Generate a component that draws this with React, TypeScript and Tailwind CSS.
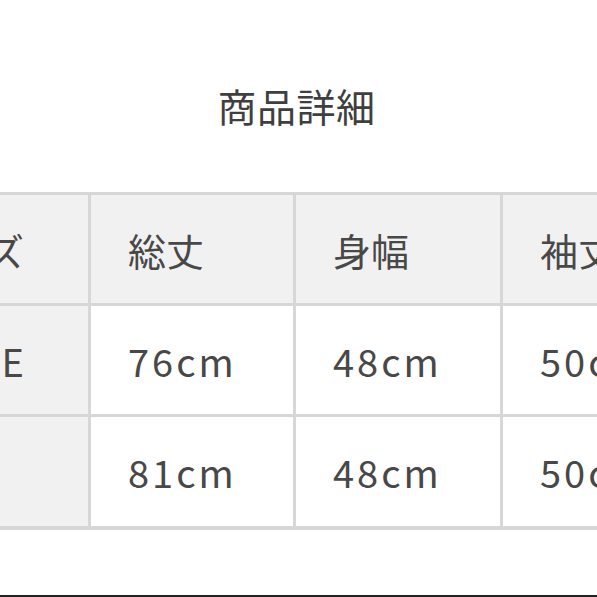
import React from "react";

const font = { fontFamily: '"Noto Sans CJK JP", "Noto Sans", sans-serif' };

function Cell({
  children,
  gray,
  first,
}: {
  children?: React.ReactNode;
  gray?: boolean;
  first?: boolean;
}) {
  return (
    <div
      className={
        "flex items-center overflow-hidden whitespace-nowrap min-w-0 text-[38px] text-[#484848] " +
        (gray ? "bg-[#f1f1f1] " : "bg-white ") +
        (first ? "justify-end pr-[64px]" : "justify-start pl-[37px]")
      }
    >
      {children}
    </div>
  );
}

export default function App() {
  const rows: { label: string; vals: string[]; gray: boolean }[] = [
    { label: "サイズ", vals: ["総丈", "身幅", "袖丈"], gray: true },
    { label: "FREE", vals: ["76cm", "48cm", "50cm"], gray: false },
    { label: "", vals: ["81cm", "48cm", "50cm"], gray: false },
  ];
  return (
    <div className="w-[597px] h-[597px] bg-white flex flex-col overflow-hidden" style={font}>
      <div className="mt-[86px] h-[38px] leading-[38px] text-center text-[39px] text-[#3f3f3f] pr-[4px] tracking-[0.5px]">
        商品詳細
      </div>
      <div className="mt-[68px] w-[597px] bg-[#d7d7d7] pt-[3px] pb-[4px] overflow-hidden">
        <div className="grid grid-cols-[88px_202px_204px_1fr] grid-rows-[108px_108px_109px] gap-[3px]">
          {rows.map((r, i) => (
            <React.Fragment key={i}>
              <Cell gray first>
                <span className={i === 1 ? "mr-[-6px] tracking-[6px]" : ""}>{r.label}</span>
              </Cell>
              {r.vals.map((v, j) => (
                <Cell key={j} gray={r.gray}>
                  <span className={r.gray ? "" : "tracking-[3px]"}>{v}</span>
                </Cell>
              ))}
            </React.Fragment>
          ))}
        </div>
      </div>
      <div className="mt-auto h-[2px] bg-[#222]" />
    </div>
  );
}
